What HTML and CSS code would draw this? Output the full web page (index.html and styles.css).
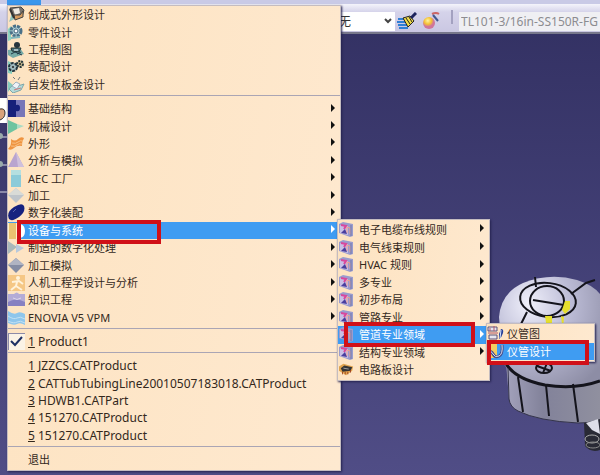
FILE: index.html
```
<!DOCTYPE html>
<html lang="zh-CN">
<head>
  <meta charset="UTF-8">
  <meta name="viewport" content="width=device-width, initial-scale=1.0">
  <title>CATIA</title>
  <link rel="stylesheet" href="styles.css">
</head>
<body>

  <svg class="sprite" aria-hidden="true">
    <symbol id="i-shape" viewBox="0 0 17 17"><path d="M0 2l4 5-3 9 7-4z" fill="#8fc4bd"/><path d="M2 2l11-1 3 3-2 7-7 2z" fill="#77716b" stroke="#444" stroke-width="1"/><path d="M5 3l6-1 1 5-5 2z" fill="#eee9e1"/><path d="M6 9l6 0 3-4v6l-8 3z" fill="#d59b5f" stroke="#444" stroke-width="1"/><path d="M2 3l4 9" stroke="#333" stroke-width="2"/></symbol>
    <symbol id="i-part" viewBox="0 0 17 17"><path d="M0 5l3-3v14l-3 1z" fill="#8fd3c0"/><circle cx="8" cy="7" r="5" fill="#afcfd5" stroke="#4a7088" stroke-width="3" stroke-dasharray="3 1"/><circle cx="8" cy="7" r="2" fill="#fff" stroke="#3d6078"/><path d="M3 14l9-1" stroke="#80b7bd" stroke-width="2"/></symbol>
    <symbol id="i-draw" viewBox="0 0 17 17"><path d="M0 9l12-2 4 6-11 4-5-3z" fill="#77aaa6"/><circle cx="9" cy="4" r="3" fill="#27343d"/><path d="M3 7h10l-2 4-7-1z" fill="#4b7480" stroke="#233" stroke-width="1"/><path d="M3 13l4-2 7 3M9 13l4-2" stroke="#203848" fill="none"/><path d="M6 9h4" stroke="#fff"/></symbol>
    <symbol id="i-asm" viewBox="0 0 17 17"><path d="M0 3l4 2v11l-4-1z" fill="#86cdbd"/><circle cx="5" cy="9" r="4" fill="#9fb8bd" stroke="#24363f" stroke-width="2" stroke-dasharray="3 1"/><circle cx="12" cy="6" r="3" fill="#c0b48c" stroke="#26363b" stroke-width="2" stroke-dasharray="2 1"/><circle cx="5" cy="9" r="1" fill="#222"/><circle cx="12" cy="6" r="1" fill="#222"/></symbol>
    <symbol id="i-sheet" viewBox="0 0 17 17"><path d="M0 5l5 4-5 7z" fill="#86cdbd"/><path d="M1 13q4-6 9-3l6-2-3 6-8 3z" fill="#b4dcdc" stroke="#7fa6a8"/><path d="M4 10l4-4 4 2-3 5z" fill="#eef2f8" stroke="#9db0be"/><path d="M5 1l2 2M12 1l-2 3" stroke="#777"/><path d="M6 14l7-2" stroke="#c77"/></symbol>
    <symbol id="i-base" viewBox="0 0 17 17"><path d="M0 0h17v17h-17z" fill="#7776b8"/><path d="M0 0h8v5q4-1 4 3t-4 3v6h-8z" fill="#16207a"/></symbol>
    <symbol id="i-mech" viewBox="0 0 17 17"><path d="M0 2l9 4v5l-9 5z" fill="#6ec4a0"/><path d="M9 6l7 2-7 3z" fill="#a9dcc4"/></symbol>
    <symbol id="i-surf" viewBox="0 0 17 17"><path d="M3 4q4 3 7 0t6-1q-2 3-2 8-5-1-8 2t-6 1q4-4 3-10z" fill="#ef9440"/><path d="M4 8q4 1 6-1t5-1M3 11q4 1 6-1t5-1" stroke="#f9c184" fill="none"/></symbol>
    <symbol id="i-anal" viewBox="0 0 17 17"><path d="M8 0l8 15h-16z" fill="#b9a4cf"/><path d="M8 0l8 15h-6z" fill="#cfc0dc"/></symbol>
    <symbol id="i-aec" viewBox="0 0 17 17"><path d="M3 0h10v17h-10z" fill="#8ccbd9"/><path d="M3 0h10v5h-10z" fill="#b5dfe0"/></symbol>
    <symbol id="i-mach" viewBox="0 0 17 17"><path d="M8 1l8 7-8 8-8-8z" fill="#bfc5cb"/><path d="M8 1l8 7h-16z" fill="#d9dbd7"/></symbol>
    <symbol id="i-dmu" viewBox="0 0 17 17"><path d="M1 15q-3-7 5-12t10-1q2 6-5 11t-10 2z" fill="#16227f"/><path d="M5 8l3-3" stroke="#5963ac"/></symbol>
    <symbol id="i-equip" viewBox="0 0 17 17"><path d="M0 1h17v16h-17z" fill="#fff0c8"/><path d="M1 1h7v16h-7z" fill="#eac370"/><path d="M13 1h4v16h-4z" fill="#3f9cf2"/><path d="M12 2q5 1 5 7t-5 7z" fill="#fff"/></symbol>
    <symbol id="i-dpm" viewBox="0 0 17 17"><path d="M0 2l9 6-9 7z" fill="#a9b8ba"/><path d="M8 5l8 4-8 5z" fill="#b8c9dc"/></symbol>
    <symbol id="i-sim" viewBox="0 0 17 17"><path d="M8 1l8 7-8 8-8-8z" fill="#858da4"/><path d="M8 1l8 7h-16z" fill="#b0b4c2"/></symbol>
    <symbol id="i-human" viewBox="0 0 17 17"><path d="M0 1h17v16h-17z" fill="#f5c785"/><circle cx="10" cy="4" r="2" fill="#fff2da"/><path d="M4 8l7-1 4 3M9 8l-1 4-5 4M8 12l6 4" stroke="#fff2da" stroke-width="2" fill="none"/></symbol>
    <symbol id="i-know" viewBox="0 0 17 17"><path d="M0 3h6q3-3 5 0h6v12h-17z" fill="#b4abd6"/><path d="M0 11q8-5 17 0v4h-17z" fill="#8780c1"/><path d="M5 7q4 3 8 0" stroke="#ded7ea" fill="none"/></symbol>
    <symbol id="i-vpm" viewBox="0 0 17 17"><path d="M0 2q6 4 9 2t8 1v11q-5-3-8-1t-9-1z" fill="#8fc6ec"/><path d="M0 7q6 4 9 2t8 1M0 12q6 3 9 1t8 1" stroke="#c3e1f3" stroke-width="1" fill="none"/></symbol>
    <symbol id="i-check" viewBox="0 0 17 17"><path d="M0 0h17v17h-17z" fill="#fbf3e6"/><path d="M0 17v-17h17" stroke="#8d8ba8" stroke-width="2" fill="none"/><path d="M3 8l4 4 7-8" stroke="#1d2f63" stroke-width="2" fill="none"/></symbol>
    <symbol id="i-sys" viewBox="0 0 15 15"><path d="M0 2l4-2 10 2v12l-3 1-11-4z" fill="#9a9cce"/><path d="M1 3l8 1v9l-8-2z" fill="#c9bfe6"/><path d="M2 3l5 1-2 3" fill="none" stroke="#d9489c" stroke-width="2"/><path d="M8 11v-6l3 1v6" fill="none" stroke="#ef9d8f" stroke-width="1"/><path d="M2 11l4-4 2 5z" fill="#4a3f9e"/><path d="M12 3v11" stroke="#7378a8"/></symbol>
    <symbol id="i-board" viewBox="0 0 17 17"><path d="M0 5l5-3 11 3-1 5-7 5-8-5z" fill="#e0a34d"/><path d="M2 7l4-3 9 2-2 4-9 1z" fill="#333"/><path d="M5 7l6 1" stroke="#aaa"/><path d="M4 11v3M7 11v3M10 11v3M13 9v3" stroke="#9a3c1c"/></symbol>
    <symbol id="i-tubed" viewBox="0 0 17 17"><path d="M1 2h9v4h-9zM2 10h8v4h-8z" fill="#e7e6ee" stroke="#5c5078"/><path d="M3 3v3M7 1v5M1 8h10" stroke="#b2586a"/><path d="M14 4q3 0 2 4t-4 6v-5z" fill="#263f98"/><path d="M14 5l-1 8" stroke="#dbe8ff"/></symbol>
    <symbol id="i-tube" viewBox="0 0 17 17"><path d="M0 1h10v14h-10z" fill="#f4cd62"/><path d="M2 10q2-3 4 1t6 2 3-11" stroke="#434b8c" stroke-width="3" fill="none"/><path d="M2 10q2-3 4 1t6 2 3-11" stroke="#dce1ee" stroke-width="1" fill="none"/></symbol>
  </svg>

  <header class="toolbar">
    <select class="filter" aria-label="过滤器"><option>无</option></select>
    <button class="tool" type="button" aria-label="格式刷">
      <svg viewBox="0 0 20 18"><path d="M1 7h9M0 10h10M1 13h9M2 16h9" stroke="#2f7fd6" stroke-width="2"/><path d="M6 6l7-2 4 5-6 6z" fill="#f0dc4a" stroke="#222"/><path d="M9 6l4 6M12 5l3 5" stroke="#222"/><path d="M14 6l5-5" stroke="#1d235c" stroke-width="3"/></svg>
    </button>
    <button class="tool" type="button" aria-label="图形向导">
      <svg viewBox="0 0 20 18"><defs><radialGradient id="ball" cx=".4" cy=".3"><stop offset="0" stop-color="#fff3a0"/><stop offset=".6" stop-color="#f4c132"/><stop offset="1" stop-color="#d0759a"/></radialGradient></defs><circle cx="8" cy="11" r="6" fill="url(#ball)"/><path d="M11 2q4-2 7 0" stroke="#c66" stroke-width="2" fill="none"/><path d="M12 3l5 6" stroke="#42588f" stroke-width="2"/></svg>
    </button>
    <span class="grip"></span>
    <input class="line-id" type="text" value="TL101-3/16in-SS150R-FG" aria-label="管线标识" disabled>
  </header>

  <div class="tree-edge">
    <svg viewBox="0 0 7 442"><path d="M0 64h7v25h-7z" fill="#fff"/><path d="M0 75q5-1 5 4t-5 7" fill="#d9a27a" stroke="#333"/><path d="M0 103h7M0 131h7M0 158h7" stroke="#d6d6e2"/><circle cx="0" cy="102" r="3" fill="#9aa"/><circle cx="0" cy="130" r="3" fill="#9aa"/></svg>
  </div>

  <svg class="model" viewBox="0 0 104 190" role="img" aria-label="储罐模型">
    <defs>
      <radialGradient id="lid" cx=".3" cy=".25" r=".9"><stop offset="0" stop-color="#f0f0fb"/><stop offset=".45" stop-color="#bcbcd6"/><stop offset="1" stop-color="#8d8da5"/></radialGradient>
      <linearGradient id="wall"><stop offset="0" stop-color="#a4a3bd"/><stop offset=".4" stop-color="#82829a"/><stop offset="1" stop-color="#90909f"/></linearGradient>
    </defs>
    <path d="M9 80h95v72q-8 1-22 1-40-2-60-12-8-4-9-12z" fill="url(#wall)"/>
    <path d="M3 47q2-24 24-34 27-11 54-3 16 5 23 14v88q-30 8-63 1-25-6-34-20z" fill="url(#lid)"/>
    <g fill="none" stroke="#14141c" stroke-width="2">
      <path d="M9 92q9 17 40 23 30 5 55-4" stroke-width="3"/>
      <ellipse cx="52" cy="30" rx="28" ry="17" transform="rotate(7 52 30)"/>
      <ellipse cx="51" cy="31" rx="17" ry="15"/>
      <path d="M37 30l31 5M39 7l1 10M31 42l-9 18M75 24l15-11 9-3M22 107l5 35M50 115l3 31M77 114l5 38" />
      <path d="M12 98l1 31q1 8 9 12 20 10 60 12 12 0 22-2" stroke="#33334a" stroke-width="1"/>
      <ellipse cx="48" cy="98" rx="8" ry="5"/><path d="M41 96l14 5M51 93l-4 10"/>
    </g>
    <path d="M69 31l5 0v8l-5 5-3-4zM49 46h7v13h-5zM65 46l3 1-1 15" fill="#e6df2e"/>
    <path d="M88 153l16-4v31q-9 3-15-4z" fill="#292a35"/><path d="M90 153l12-4 2 15-8-4z" fill="#dedee9"/><ellipse cx="96" cy="169" rx="7" ry="4" fill="none" stroke="#aaa" stroke-width="1"/><ellipse cx="97" cy="175" rx="7" ry="3" fill="none" stroke="#888"/>
  </svg>

  <span class="menubar-active"></span>

  <nav class="menu main-menu">
    <ul class="group five">
      <li><button type="button"><svg><use href="#i-shape"/></svg>创成式外形设计</button></li>
      <li><button type="button"><svg><use href="#i-part"/></svg>零件设计</button></li>
      <li><button type="button"><svg><use href="#i-draw"/></svg>工程制图</button></li>
      <li><button type="button"><svg><use href="#i-asm"/></svg>装配设计</button></li>
      <li><button type="button"><svg><use href="#i-sheet"/></svg>自发性板金设计</button></li>
    </ul>
    <ul class="group thirteen">
      <li class="more"><button type="button"><svg><use href="#i-base"/></svg>基础结构</button></li>
      <li class="more"><button type="button"><svg><use href="#i-mech"/></svg>机械设计</button></li>
      <li class="more"><button type="button"><svg><use href="#i-surf"/></svg>外形</button></li>
      <li class="more"><button type="button"><svg><use href="#i-anal"/></svg>分析与模拟</button></li>
      <li class="more"><button type="button"><svg><use href="#i-aec"/></svg>AEC 工厂</button></li>
      <li class="more"><button type="button"><svg><use href="#i-mach"/></svg>加工</button></li>
      <li class="more"><button type="button"><svg><use href="#i-dmu"/></svg>数字化装配</button></li>
      <li class="more open">
        <button type="button"><svg><use href="#i-equip"/></svg>设备与系统</button>
        <div class="menu submenu systems">
          <ul class="group nine">
            <li class="more"><button type="button"><svg><use href="#i-sys"/></svg>电子电缆布线规则</button></li>
            <li class="more"><button type="button"><svg><use href="#i-sys"/></svg>电气线束规则</button></li>
            <li class="more"><button type="button"><svg><use href="#i-sys"/></svg>HVAC 规则</button></li>
            <li class="more"><button type="button"><svg><use href="#i-sys"/></svg>多专业</button></li>
            <li class="more"><button type="button"><svg><use href="#i-sys"/></svg>初步布局</button></li>
            <li class="more"><button type="button"><svg><use href="#i-sys"/></svg>管路专业</button></li>
            <li class="more open">
              <button type="button"><svg><use href="#i-sys"/></svg>管道专业领域</button>
              <div class="menu submenu tubing">
                <ul class="group two">
                  <li><button type="button"><svg><use href="#i-tubed"/></svg>仪管图</button></li>
                  <li class="open"><button type="button"><svg><use href="#i-tube"/></svg>仪管设计</button></li>
                </ul>
              </div>
            </li>
            <li class="more"><button type="button"><svg><use href="#i-sys"/></svg>结构专业领域</button></li>
            <li><button type="button"><svg><use href="#i-board"/></svg>电路板设计</button></li>
          </ul>
        </div>
      </li>
      <li class="more"><button type="button"><svg><use href="#i-dpm"/></svg>制造的数字化处理</button></li>
      <li class="more"><button type="button"><svg><use href="#i-sim"/></svg>加工模拟</button></li>
      <li class="more"><button type="button"><svg><use href="#i-human"/></svg>人机工程学设计与分析</button></li>
      <li class="more"><button type="button"><svg><use href="#i-know"/></svg>知识工程</button></li>
      <li class="more"><button type="button"><svg><use href="#i-vpm"/></svg>ENOVIA V5 VPM</button></li>
    </ul>
    <ul class="group files">
      <li><button type="button"><svg><use href="#i-check"/></svg><span><u>1</u> Product1</span></button></li>
    </ul>
    <ul class="group five files">
      <li><button type="button"><svg></svg><span><u>1</u> JZZCS.CATProduct</span></button></li>
      <li><button type="button"><svg></svg><span><u>2</u> CATTubTubingLine20010507183018.CATProduct</span></button></li>
      <li><button type="button"><svg></svg><span><u>3</u> HDWB1.CATPart</span></button></li>
      <li><button type="button"><svg></svg><span><u>4</u> 151270.CATProduct</span></button></li>
      <li><button type="button"><svg></svg><span><u>5</u> 151270.CATProduct</span></button></li>
    </ul>
    <ul class="group">
      <li><button type="button"><svg></svg>退出</button></li>
    </ul>
  </nav>

  <div class="mark mark-equip"></div>
  <div class="mark mark-tubing"></div>
  <div class="mark mark-design"></div>

</body>
</html>
```
FILE: styles.css
```
body {
  margin: 0;
  min-height: 100vh;
  position: relative;
  overflow: hidden;
  background: linear-gradient(#323062, #504d86);
  font-family: "Noto Sans", "Noto Sans CJK SC", sans-serif;
  font-size: 11px;
  color: #33281c;
}
.sprite {
  position: absolute;
  width: 0;
  height: 0;
}

/* toolbar */
.toolbar {
  box-sizing: border-box;
  height: 34px;
  padding: 6px 0 0;
  display: flex;
  justify-content: flex-end;
  align-items: center;
  border-top: 4px solid #c9cae6;
  border-bottom: 2px solid #77778b;
  background: linear-gradient(#f4f4fb, #d5d3ea 8px, #cac7e2);
}
.filter {
  appearance: none;
  width: 60px;
  height: 19px;
  padding: 0 4px;
  border: none;
  border-radius: 0;
  background: #fff url("data:image/svg+xml,%3Csvg xmlns='http://www.w3.org/2000/svg' width='8' height='6'%3E%3Cpath d='M1 1l3 3 3-3' fill='none' stroke='%23444' stroke-width='2'/%3E%3C/svg%3E") no-repeat right 3px center;
  font: inherit;
  font-size: 12px;
  color: #333;
}
.tool {
  width: 20px;
  height: 18px;
  margin-left: 2px;
  padding: 0;
  border: none;
  background: none;
}
.tool + .tool {
  margin-left: 4px;
}
.tool svg {
  display: block;
  width: 20px;
  height: 18px;
}
.grip {
  width: 2px;
  height: 14px;
  margin: 0 6px 8px 10px;
  background: #a3a1c0;
}
.line-id {
  box-sizing: border-box;
  width: 141px;
  height: 19px;
  padding: 0 0 0 2px;
  border: none;
  background: #efeff3;
  font: inherit;
  font-size: 12px;
  color: #8c8c90;
}
.menubar-active {
  position: absolute;
  left: 7px;
  top: 0;
  width: 34px;
  height: 5px;
  background: #3b97ec;
}

/* viewer */
.tree-edge {
  width: 7px;
}
.tree-edge svg {
  display: block;
  width: 7px;
  height: 442px;
}
.model {
  position: absolute;
  right: 0;
  top: 270px;
  width: 104px;
  height: 190px;
}

/* menus */
.menu {
  position: absolute;
  box-sizing: border-box;
  border: 1px solid #c4bcc0;
  background: linear-gradient(100deg, #fde3c1, #fee9d0);
  box-shadow: 1px 1px 2px #25234f;
}
.main-menu {
  left: 7px;
  top: 5px;
  width: 334px;
}
.submenu {
  left: calc(100% - 3px);
  top: -3px;
  z-index: 1;
}
.systems {
  width: 153px;
}
.tubing {
  width: 109px;
}
.group {
  margin: 0;
  padding: 0 0 2px;
  list-style: none;
  display: grid;
  grid-auto-rows: 1fr;
  min-height: 17px;
}
.group + .group {
  border-top: 1px solid #aaa5b4;
  padding-top: 4px;
}
.submenu .group {
  padding: 1px 0;
}
.two {
  min-height: 35px;
}
.five {
  min-height: 87px;
}
.nine {
  min-height: 158px;
}
.thirteen {
  min-height: 226px;
}
.group li {
  position: relative;
  display: grid;
}
.menu button {
  display: flex;
  align-items: center;
  gap: 3px;
  min-height: 0;
  padding: 0;
  border: none;
  background: none;
  font: inherit;
  line-height: 17px;
  color: inherit;
  text-align: left;
  white-space: nowrap;
}
.menu button svg {
  width: 17px;
  height: 17px;
}
.systems > .group > li > button {
  gap: 5px;
  padding-left: 1px;
}
.systems > .group > li > button svg {
  width: 15px;
  height: 15px;
}
.files {
  font-size: 12px;
}
.more::after {
  content: "";
  position: absolute;
  right: 5px;
  top: calc(50% - 5px);
  border: 4px solid transparent;
  border-left-color: #111;
  border-right-width: 0;
}
.menu .open > button {
  background: #3f9cf2;
  color: #fff;
}
.open::after {
  border-left-color: #fff;
}

/* highlight frames */
.mark {
  position: absolute;
  z-index: 2;
  box-sizing: border-box;
  border: 4px solid #d01018;
  pointer-events: none;
}
.mark-equip {
  left: 17px;
  top: 220px;
  width: 144px;
  height: 24px;
}
.mark-tubing {
  left: 344px;
  top: 322px;
  width: 131px;
  height: 25px;
}
.mark-design {
  left: 487px;
  top: 340px;
  width: 102px;
  height: 25px;
}
```
